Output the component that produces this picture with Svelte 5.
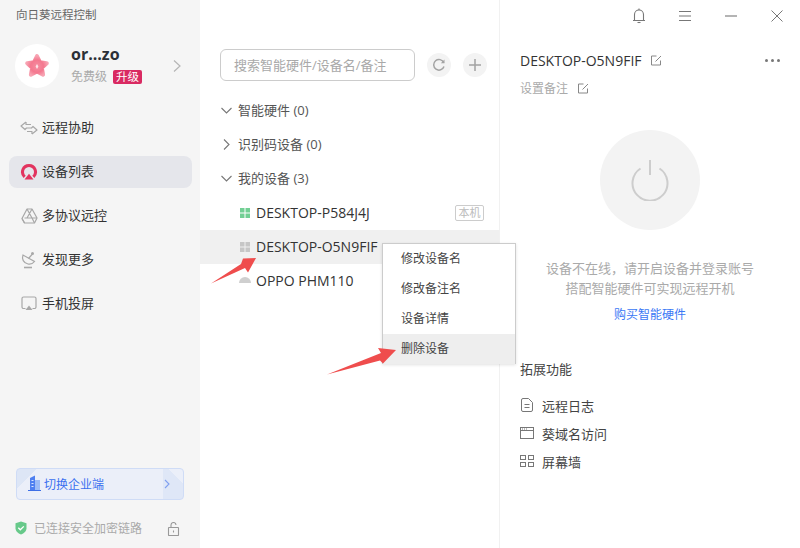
<script>
  const nav = [
    { id: 'assist', label: '远程协助' },
    { id: 'list', label: '设备列表', active: true },
    { id: 'proto', label: '多协议远控' },
    { id: 'more', label: '发现更多' },
    { id: 'cast', label: '手机投屏' }
  ];
  const menu = ['修改设备名', '修改备注名', '设备详情', '删除设备'];
</script>

<div class="app">
  <aside class="side">
    <div class="apptitle">向日葵远程控制</div>
    <div class="user">
      <div class="avatar">
        <svg width="30" height="30" viewBox="0 0 30 30">
          <defs>
            <radialGradient id="st" cx="50%" cy="55%" r="55%">
              <stop offset="0" stop-color="#f58ea1" />
              <stop offset="0.6" stop-color="#f4788f" />
              <stop offset="1" stop-color="#f7a3b2" />
            </radialGradient>
          </defs>
          <path d="M15 5l3 6.300 6.800.9-5 4.700 1.300 6.800L15 20.400l-6.100 3.300 1.300-6.800-5-4.700 6.800-.9z" fill="url(#st)" stroke="url(#st)" stroke-width="4" stroke-linejoin="round" />
          <path d="M15 13l1.400 2.500L15 18l-1.400-2.500z" fill="#fde3e8" />
        </svg>
      </div>
      <div class="uinfo">
        <div class="uname">or...zo</div>
        <div class="ulevel"><span>免费级</span><span class="up">升级</span></div>
      </div>
      <svg class="uchev" width="10" height="14" viewBox="0 0 10 14"><path d="M2 1.500l6 5.500-6 5.500" fill="none" stroke="#b5b5b5" stroke-width="1.200" /></svg>
    </div>

    <nav class="nav">
      {#each nav as n}
        <div class="nitem" class:active={n.active}>
          <span class="nicon">
            {#if n.id === 'assist'}
              <svg width="18" height="14" viewBox="0 0 18 14" fill="none" stroke="#a8a8a8" stroke-width="1.200" stroke-linejoin="round">
                <path d="M6 1L1 5l4 3.500 1.500-1.500h5.500" />
                <path d="M6 1v2.500h5" />
                <path d="M12 13l5-4-4-3.500-1.500 1.500" />
                <path d="M12 13v-2.500H7" />
              </svg>
            {:else if n.id === 'list'}
              <svg width="18" height="18" viewBox="0 0 18 18">
                <path d="M9 1a8 8 0 0 1 5.400 13.900L12.300 12.800a5 5 0 1 0-6.600 0L3.600 14.900A8 8 0 0 1 9 1z" fill="#e2345f" />
                <path d="M9 10.800l4.500 5.700H4.500z" fill="#e2345f" />
              </svg>
            {:else if n.id === 'proto'}
              <svg width="17" height="16" viewBox="0 0 17 16" fill="none" stroke="#a8a8a8" stroke-width="1.200" stroke-linejoin="round">
                <path d="M6 1h5l5 9-2.500 5h-10L1 10.500z" />
                <path d="M6 1l5 9H3.500M11 1L6 10M1 10.500l2.500 4.500M16 10h-5l2.500 5" />
              </svg>
            {:else if n.id === 'more'}
              <svg width="16" height="18" viewBox="0 0 16 18" fill="none" stroke="#a8a8a8" stroke-width="1.200">
                <path d="M2 4c-1.500 4 .5 8 5 9 2.500.5 5-.5 6.500-2.500z" />
                <path d="M7.500 7.500L11 3.500" />
                <circle cx="11.500" cy="2.500" r="1.500" fill="#a8a8a8" stroke="none" />
                <path d="M3 16.500h8" stroke-width="1.600" />
              </svg>
            {:else}
              <svg width="16" height="16" viewBox="0 0 16 16">
                <path d="M4.500 12.500H2.500a1.500 1.500 0 0 1-1.500-1.500V2.500A1.500 1.500 0 0 1 2.500 1h11A1.500 1.500 0 0 1 15 2.500V11a1.500 1.500 0 0 1-1.500 1.500h-2" fill="none" stroke="#a8a8a8" stroke-width="1.200" />
                <path d="M8 9.500l3.500 4.500h-7z" fill="#a8a8a8" />
              </svg>
            {/if}
          </span>
          <span>{n.label}</span>
        </div>
      {/each}
    </nav>

    <div class="enterprise">
      <svg class="bldg" width="15" height="16" viewBox="0 0 15 16">
        <path d="M3 3l5-2.500V15H3z" fill="#4f80f0" />
        <path d="M8 5h5v10H8z" fill="#9dbcf7" />
        <path d="M1 15h13v1H1z" fill="#3d6fe6" />
        <path d="M4.500 5h2v1h-2zM4.500 8h2v1h-2zM4.500 11h2v1h-2z" fill="#dbe6fc" />
      </svg>
      <span class="etext">切换企业端</span>
      <svg class="echev" width="8" height="10" viewBox="0 0 8 10"><path d="M2 1l4 4-4 4" fill="none" stroke="#7f9ff0" stroke-width="1.100" /></svg>
    </div>

    <div class="secure">
      <svg width="12" height="14" viewBox="0 0 12 14">
        <path d="M6 .5l5.500 1.800v5c0 3-2.500 5.200-5.500 6.200C3 12.500.5 10.300.5 7.300v-5z" fill="#67c98a" />
        <path d="M3.300 6.800l2 2 3.500-3.400" fill="none" stroke="#fff" stroke-width="1.300" />
      </svg>
      <span class="stext">已连接安全加密链路</span>
      <svg class="lock" width="13" height="14" viewBox="0 0 13 14" fill="none" stroke="#999" stroke-width="1.100">
        <rect x="1.500" y="5.500" width="10" height="8" rx=".5" />
        <path d="M4 5.500V3a2.500 2.500 0 0 1 5 0" />
        <path d="M6.500 8.500v2" />
      </svg>
    </div>
  </aside>

  <main class="mid">
    <div class="searchrow">
      <div class="search">搜索智能硬件/设备名/备注</div>
      <button class="round" aria-label="刷新">
        <svg width="14" height="14" viewBox="0 0 14 14" fill="none" stroke="#a3a3a3" stroke-width="1.500">
          <path d="M11.800 4.600A5.300 5.300 0 1 0 12 8.500" />
          <path d="M12.500 1.500v3.800H8.800z" fill="#a3a3a3" stroke="none" />
        </svg>
      </button>
      <button class="round" aria-label="添加">
        <svg width="14" height="14" viewBox="0 0 14 14"><path d="M7 1v12M1 7h12" stroke="#a3a3a3" stroke-width="1.500" /></svg>
      </button>
    </div>

    <div class="tree">
      <div class="group"><svg width="11" height="7" viewBox="0 0 11 7"><path d="M.5 1l5 5 5-5" fill="none" stroke="#777" stroke-width="1.100" /></svg><span>智能硬件 (0)</span></div>
      <div class="group"><svg width="11" height="11" viewBox="0 0 11 11"><path d="M3 .5l5 5-5 5" fill="none" stroke="#777" stroke-width="1.100" /></svg><span>识别码设备 (0)</span></div>
      <div class="group"><svg width="11" height="7" viewBox="0 0 11 7"><path d="M.5 1l5 5 5-5" fill="none" stroke="#777" stroke-width="1.100" /></svg><span>我的设备 (3)</span></div>

      <div class="device">
        <svg width="10" height="10" viewBox="0 0 10 10" fill="#72cf94"><path d="M0 0h4.500v4.500H0zM5.500 0H10v4.500H5.500zM0 5.500h4.500V10H0zM5.500 5.500H10V10H5.500z" /></svg>
        <span class="dtext">DESKTOP-P584J4J</span>
        <span class="self">本机</span>
      </div>
      <div class="device hover">
        <svg width="10" height="10" viewBox="0 0 10 10" fill="#c6c6c6"><path d="M0 0h4.500v4.500H0zM5.500 0H10v4.500H5.500zM0 5.500h4.500V10H0zM5.500 5.500H10V10H5.500z" /></svg>
        <span class="dtext">DESKTOP-O5N9FIF</span>
      </div>
      <div class="device">
        <svg width="12" height="10" viewBox="0 0 12 10" fill="#cfcfcf" class="android"><path d="M0 8a6 6 0 0 1 12 0z" /></svg>
        <span class="dtext">OPPO PHM110</span>
      </div>
    </div>
  </main>

  <section class="detail">
    <div class="winbar">
      <svg width="14" height="16" viewBox="0 0 14 16" fill="none" stroke="#777" stroke-width="1.100">
        <path d="M1 12.500h12M2.500 12.500V6.500a4.500 4.500 0 0 1 9 0v6" />
        <path d="M5.500 14.500h3" />
        <path d="M7 .5v1.500" />
      </svg>
      <svg width="14" height="12" viewBox="0 0 14 12" stroke="#777" stroke-width="1.100"><path d="M1 1.500h12M1 6h12M1 10.500h12" /></svg>
      <svg width="14" height="12" viewBox="0 0 14 12" stroke="#777" stroke-width="1.100"><path d="M1 6h12" /></svg>
      <svg width="14" height="12" viewBox="0 0 14 12" stroke="#777" stroke-width="1"><path d="M1.500 .5l11 11M12.500 .5l-11 11" /></svg>
    </div>

    <div class="dhead">
      <span class="dname">DESKTOP-O5N9FIF</span>
      <svg width="11" height="11" viewBox="0 0 11 11" fill="none" stroke="#888" stroke-width="1"><path d="M9.500 5.500v4.500H.5V1h5" /><path d="M4.500 6.500L10 1" /></svg>
      <span class="dots"><i></i><i></i><i></i></span>
    </div>
    <div class="remark">
      <span>设置备注</span>
      <svg width="11" height="11" viewBox="0 0 11 11" fill="none" stroke="#888" stroke-width="1"><path d="M9.500 5.500v4.500H.5V1h5" /><path d="M4.500 6.500L10 1" /></svg>
    </div>

    <div class="power">
      <svg width="38" height="42" viewBox="0 0 38 42" fill="none" stroke="#cdcdcd" stroke-width="2">
        <path d="M19 1v15" />
        <path d="M9.500 9.500a17.500 17.500 0 1 0 19 0" />
      </svg>
    </div>

    <p class="off">设备不在线，请开启设备并登录账号<br />搭配智能硬件可实现远程开机</p>
    <div class="buy">购买智能硬件</div>

    <h3 class="ext">拓展功能</h3>
    <ul class="extlist">
      <li>
        <svg width="13" height="14" viewBox="0 0 13 14" fill="none" stroke="#777" stroke-width="1"><path d="M1 2a1.500 1.500 0 0 1 1.500-1.500h5.500L12 4.500V12a1.500 1.500 0 0 1-1.500 1.500h-8A1.500 1.500 0 0 1 1 12z" /><path d="M4 6.500h5M4 9.500h5" /></svg>
        <span>远程日志</span>
      </li>
      <li>
        <svg width="14" height="12" viewBox="0 0 14 12" fill="none" stroke="#777" stroke-width="1"><rect x=".5" y=".5" width="13" height="11" /><path d="M.5 3.500h13" /><path d="M2 2h1M4 2h1M6 2h1" /></svg>
        <span>葵域名访问</span>
      </li>
      <li>
        <svg width="14" height="12" viewBox="0 0 14 12" fill="none" stroke="#777" stroke-width="1"><rect x=".5" y=".5" width="5" height="4" /><rect x="8.500" y=".5" width="5" height="4" /><rect x=".5" y="7.500" width="5" height="4" /><rect x="8.500" y="7.500" width="5" height="4" /></svg>
        <span>屏幕墙</span>
      </li>
    </ul>
  </section>

  <div class="ctx">
    {#each menu as m, i}
      <div class="mi" class:on={i === 3}>{m}</div>
    {/each}
  </div>

  <svg class="arrows" width="800" height="548" viewBox="0 0 800 548">
    <path d="M211 283.500L241 264L243 258.500L256 258L248 272.500L245 268z" fill="#ef4d4d" />
    <path d="M327 374.500L381 353L378 348L396 350L383 363.500L380 360.500z" fill="#ef4d4d" />
  </svg>
</div>

<style>
  :global(body) { margin: 0; background: #fff; }
  .app {
    position: relative;
    width: 800px;
    height: 548px;
    overflow: hidden;
    display: grid;
    grid-template-columns: 200px 300px 300px;
    font-family: "Open Sans", "Noto Sans CJK SC", sans-serif;
    color: #333;
    background: #fff;
  }
  .side {
    background: #f5f5f5;
    display: flex;
    flex-direction: column;
    height: 548px;
  }
  .apptitle { font-size: 11.500px; line-height: 16px; color: #666; padding: 7px 0 0 16px; }
  .user { display: flex; align-items: center; margin-top: 21px; padding-left: 15px; height: 44px; }
  .avatar {
    width: 44px; height: 44px; border-radius: 50%; background: #fff;
    display: flex; align-items: center; justify-content: center;
  }
  .uinfo { margin-left: 12px; width: 101px; }
  .uname { font-size: 16px; font-weight: 700; line-height: 20px; color: #2b2f36; margin-top: -3px; }
  .ulevel { display: flex; align-items: center; font-size: 12px; color: #aaa; line-height: 16px; margin-top: 5px; }
  .up {
    margin-left: 6px; background: #d92a62; color: #fff; font-size: 11.500px; line-height: 14px;
    padding: 0 1px; width: 27px; text-align: center; border-radius: 2px; white-space: nowrap;
  }
  .nav { display: flex; flex-direction: column; gap: 12px; margin-top: 24px; padding: 0 8px 0 9px; }
  .nitem {
    display: flex; align-items: center; height: 32px; border-radius: 8px; font-size: 13px; color: #333;
  }
  .nitem span:last-child { padding-bottom: 3px; }
  .nitem.active { background: #e5e6eb; }
  .nicon { width: 33px; display: flex; justify-content: center; padding-left: 7px; box-sizing: border-box; }
  .enterprise {
    margin: auto 16px 0 16px; height: 32px; box-sizing: border-box; border: 1px solid #cfdcf6; border-radius: 4px;
    display: flex; align-items: center; padding: 0 12px 0 10px;
    background:
      linear-gradient(135deg, #dde6f6 0 14px, transparent 14px) no-repeat,
      linear-gradient(225deg, transparent 10px, #dfe7f7 10px) no-repeat right / 20px 100%,
      #ebeff9;
  }
  .bldg { margin-top: -2px; }
  .etext { font-size: 12px; color: #3a6ff0; margin-left: 2px; flex: 1; }
  .secure { display: flex; align-items: center; height: 16px; margin: 20px 0 12px 15px; }
  .stext { font-size: 12px; color: #aaa; margin-left: 7px; width: 133px; }
  .lock { margin-top: 2px; }

  .mid { position: relative; border-right: 1px solid #f1f1f1; box-sizing: content-box; width: 299px; }
  .searchrow { display: flex; align-items: center; padding: 49px 0 0 20px; }
  .search {
    width: 195px; height: 32px; box-sizing: border-box; border: 1px solid #ccc; border-radius: 6px;
    font-size: 13px; line-height: 30px; color: #a9a9a9; padding-left: 13px; white-space: nowrap;
  }
  .round {
    width: 24px; height: 24px; border-radius: 50%; border: 0; background: #f3f3f3; padding: 0;
    display: flex; align-items: center; justify-content: center; margin-left: 12px;
  }
  .tree { margin-top: 13px; }
  .group { display: flex; align-items: center; height: 34px; padding-left: 21px; font-size: 13px; color: #555; }
  .group span { padding-bottom: 3px; }
  .group svg { width: 11px; margin: -2px 6px 0 0; }
  .device { position: relative; display: flex; align-items: center; height: 34px; padding-left: 40px; font-size: 14px; color: #333; }
  .dtext { padding-bottom: 2px; }
  .device.hover { background: #f0f0f0; }
  .device svg { margin-right: 6px; }
  .device .android { margin-left: -1px; margin-right: 5px; margin-top: -2px; }
  .self {
    position: absolute; left: 255px; top: 9px; width: 29px; height: 16px; box-sizing: border-box;
    border: 1px solid #ccc; border-radius: 2px; font-size: 11px; line-height: 14px; color: #bbb; text-align: center;
  }
  .detail { display: flex; flex-direction: column; padding-left: 20px; width: 280px; }
  .winbar { display: flex; align-items: center; height: 32px; gap: 32px; padding-left: 112px; }
  .dhead { display: flex; align-items: center; height: 20px; margin-top: 18px; font-size: 14px; color: #333; position: relative; }
  .dname { margin-right: 9px; }
  .dots { position: absolute; left: 245px; top: 9px; display: flex; gap: 3px; }
  .dots i { width: 3px; height: 3px; border-radius: 50%; background: #777; }
  .remark { display: flex; align-items: center; gap: 10px; height: 20px; margin-top: 8px; font-size: 12px; color: #aaa; }
  .power {
    width: 100px; height: 100px; border-radius: 50%; background: #f3f3f3; margin: 32px 0 0 80px;
    display: flex; align-items: center; justify-content: center;
  }
  .off { margin: 28px 0 0; width: 260px; text-align: center; font-size: 13px; line-height: 20px; color: #aaa; }
  .buy { width: 260px; text-align: center; font-size: 12px; line-height: 16px; color: #3a78f5; margin-top: 9px; }
  .ext { margin: 36px 0 0; padding-bottom: 1px; font-size: 13px; font-weight: 400; line-height: 20px; color: #444; }
  .extlist { list-style: none; margin: 11px 0 0; padding: 0; }
  .extlist li { display: flex; align-items: center; height: 28px; font-size: 13px; color: #444; }
  .extlist svg { width: 14px; margin-right: 8px; }

  .ctx {
    position: absolute; left: 382px; top: 243px; width: 134px; height: 121px; box-sizing: border-box;
    background: #fff; border: 1px solid #ccc; box-shadow: 0 1px 3px rgba(0,0,0,.12); padding-top: 0;
  }
  .mi { height: 30px; line-height: 30px; font-size: 12px; color: #444; padding-left: 18px; }
  .mi.on { background: #eee; }
  .arrows { position: absolute; left: 0; top: 0; pointer-events: none; }
</style>
